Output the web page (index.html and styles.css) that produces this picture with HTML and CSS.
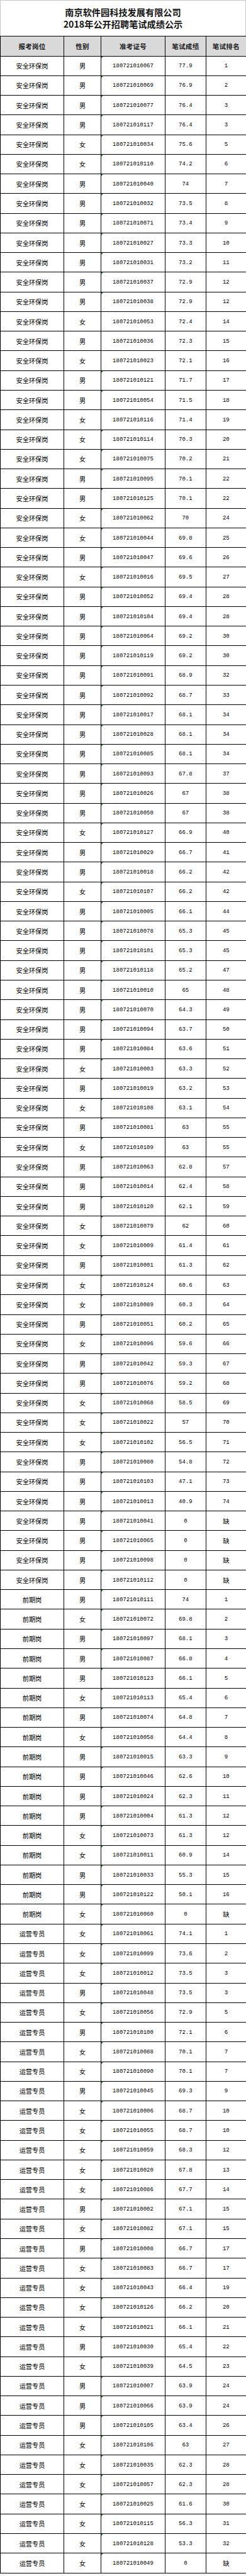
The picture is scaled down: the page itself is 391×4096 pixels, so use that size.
FILE: index.html
```html
<!DOCTYPE html>
<html lang="zh-CN">
<head>
<meta charset="utf-8">
<title>南京软件园科技发展有限公司2018年公开招聘笔试成绩公示</title>
<link rel="stylesheet" href="styles.css">
</head>
<body>
<div class="sheet">
  <div class="title">
    <div>南京软件园科技发展有限公司</div>
    <div>2018年公开招聘笔试成绩公示</div>
  </div>
  <table class="grid">
    <colgroup>
      <col class="c-post"><col class="c-sex"><col class="c-id"><col class="c-score"><col class="c-rank">
    </colgroup>
    <thead>
      <tr><th>报考岗位</th><th>性别</th><th>准考证号</th><th>笔试成绩</th><th>笔试排名</th></tr>
    </thead>
    <tbody>
<tr><td>安全环保岗</td><td>男</td><td class="id">180721010067</td><td class="n">77.9</td><td class="n">1</td></tr>
<tr><td>安全环保岗</td><td>男</td><td class="id">180721010069</td><td class="n">76.9</td><td class="n">2</td></tr>
<tr><td>安全环保岗</td><td>男</td><td class="id">180721010077</td><td class="n">76.4</td><td class="n">3</td></tr>
<tr><td>安全环保岗</td><td>男</td><td class="id">180721010117</td><td class="n">76.4</td><td class="n">3</td></tr>
<tr><td>安全环保岗</td><td>女</td><td class="id">180721010034</td><td class="n">75.6</td><td class="n">5</td></tr>
<tr><td>安全环保岗</td><td>女</td><td class="id">180721010110</td><td class="n">74.2</td><td class="n">6</td></tr>
<tr><td>安全环保岗</td><td>男</td><td class="id">180721010040</td><td class="n">74</td><td class="n">7</td></tr>
<tr><td>安全环保岗</td><td>男</td><td class="id">180721010032</td><td class="n">73.5</td><td class="n">8</td></tr>
<tr><td>安全环保岗</td><td>男</td><td class="id">180721010071</td><td class="n">73.4</td><td class="n">9</td></tr>
<tr><td>安全环保岗</td><td>男</td><td class="id">180721010027</td><td class="n">73.3</td><td class="n">10</td></tr>
<tr><td>安全环保岗</td><td>男</td><td class="id">180721010031</td><td class="n">73.2</td><td class="n">11</td></tr>
<tr><td>安全环保岗</td><td>男</td><td class="id">180721010037</td><td class="n">72.9</td><td class="n">12</td></tr>
<tr><td>安全环保岗</td><td>男</td><td class="id">180721010038</td><td class="n">72.9</td><td class="n">12</td></tr>
<tr><td>安全环保岗</td><td>女</td><td class="id plain">180721010053</td><td class="n">72.4</td><td class="n">14</td></tr>
<tr><td>安全环保岗</td><td>男</td><td class="id plain">180721010036</td><td class="n">72.3</td><td class="n">15</td></tr>
<tr><td>安全环保岗</td><td>女</td><td class="id plain">180721010023</td><td class="n">72.1</td><td class="n">16</td></tr>
<tr><td>安全环保岗</td><td>男</td><td class="id">180721010121</td><td class="n">71.7</td><td class="n">17</td></tr>
<tr><td>安全环保岗</td><td>男</td><td class="id">180721010054</td><td class="n">71.5</td><td class="n">18</td></tr>
<tr><td>安全环保岗</td><td>女</td><td class="id plain">180721010116</td><td class="n">71.4</td><td class="n">19</td></tr>
<tr><td>安全环保岗</td><td>女</td><td class="id">180721010114</td><td class="n">70.3</td><td class="n">20</td></tr>
<tr><td>安全环保岗</td><td>女</td><td class="id">180721010075</td><td class="n">70.2</td><td class="n">21</td></tr>
<tr><td>安全环保岗</td><td>男</td><td class="id">180721010095</td><td class="n">70.1</td><td class="n">22</td></tr>
<tr><td>安全环保岗</td><td>男</td><td class="id">180721010125</td><td class="n">70.1</td><td class="n">22</td></tr>
<tr><td>安全环保岗</td><td>女</td><td class="id">180721010062</td><td class="n">70</td><td class="n">24</td></tr>
<tr><td>安全环保岗</td><td>女</td><td class="id">180721010044</td><td class="n">69.8</td><td class="n">25</td></tr>
<tr><td>安全环保岗</td><td>男</td><td class="id">180721010047</td><td class="n">69.6</td><td class="n">26</td></tr>
<tr><td>安全环保岗</td><td>女</td><td class="id">180721010016</td><td class="n">69.5</td><td class="n">27</td></tr>
<tr><td>安全环保岗</td><td>男</td><td class="id">180721010052</td><td class="n">69.4</td><td class="n">28</td></tr>
<tr><td>安全环保岗</td><td>男</td><td class="id">180721010104</td><td class="n">69.4</td><td class="n">28</td></tr>
<tr><td>安全环保岗</td><td>男</td><td class="id">180721010064</td><td class="n">69.2</td><td class="n">30</td></tr>
<tr><td>安全环保岗</td><td>男</td><td class="id">180721010119</td><td class="n">69.2</td><td class="n">30</td></tr>
<tr><td>安全环保岗</td><td>男</td><td class="id">180721010091</td><td class="n">68.9</td><td class="n">32</td></tr>
<tr><td>安全环保岗</td><td>男</td><td class="id">180721010092</td><td class="n">68.7</td><td class="n">33</td></tr>
<tr><td>安全环保岗</td><td>男</td><td class="id">180721010017</td><td class="n">68.1</td><td class="n">34</td></tr>
<tr><td>安全环保岗</td><td>男</td><td class="id">180721010028</td><td class="n">68.1</td><td class="n">34</td></tr>
<tr><td>安全环保岗</td><td>男</td><td class="id">180721010085</td><td class="n">68.1</td><td class="n">34</td></tr>
<tr><td>安全环保岗</td><td>男</td><td class="id">180721010093</td><td class="n">67.8</td><td class="n">37</td></tr>
<tr><td>安全环保岗</td><td>男</td><td class="id">180721010026</td><td class="n">67</td><td class="n">38</td></tr>
<tr><td>安全环保岗</td><td>男</td><td class="id">180721010050</td><td class="n">67</td><td class="n">38</td></tr>
<tr><td>安全环保岗</td><td>女</td><td class="id">180721010127</td><td class="n">66.9</td><td class="n">40</td></tr>
<tr><td>安全环保岗</td><td>男</td><td class="id">180721010029</td><td class="n">66.7</td><td class="n">41</td></tr>
<tr><td>安全环保岗</td><td>男</td><td class="id">180721010018</td><td class="n">66.2</td><td class="n">42</td></tr>
<tr><td>安全环保岗</td><td>女</td><td class="id">180721010107</td><td class="n">66.2</td><td class="n">42</td></tr>
<tr><td>安全环保岗</td><td>男</td><td class="id">180721010005</td><td class="n">66.1</td><td class="n">44</td></tr>
<tr><td>安全环保岗</td><td>男</td><td class="id">180721010078</td><td class="n">65.3</td><td class="n">45</td></tr>
<tr><td>安全环保岗</td><td>男</td><td class="id">180721010101</td><td class="n">65.3</td><td class="n">45</td></tr>
<tr><td>安全环保岗</td><td>男</td><td class="id">180721010118</td><td class="n">65.2</td><td class="n">47</td></tr>
<tr><td>安全环保岗</td><td>男</td><td class="id">180721010010</td><td class="n">65</td><td class="n">48</td></tr>
<tr><td>安全环保岗</td><td>男</td><td class="id">180721010070</td><td class="n">64.3</td><td class="n">49</td></tr>
<tr><td>安全环保岗</td><td>男</td><td class="id">180721010094</td><td class="n">63.7</td><td class="n">50</td></tr>
<tr><td>安全环保岗</td><td>男</td><td class="id">180721010084</td><td class="n">63.6</td><td class="n">51</td></tr>
<tr><td>安全环保岗</td><td>女</td><td class="id">180721010003</td><td class="n">63.3</td><td class="n">52</td></tr>
<tr><td>安全环保岗</td><td>男</td><td class="id">180721010019</td><td class="n">63.2</td><td class="n">53</td></tr>
<tr><td>安全环保岗</td><td>女</td><td class="id">180721010108</td><td class="n">63.1</td><td class="n">54</td></tr>
<tr><td>安全环保岗</td><td>男</td><td class="id">180721010081</td><td class="n">63</td><td class="n">55</td></tr>
<tr><td>安全环保岗</td><td>女</td><td class="id">180721010109</td><td class="n">63</td><td class="n">55</td></tr>
<tr><td>安全环保岗</td><td>男</td><td class="id">180721010063</td><td class="n">62.8</td><td class="n">57</td></tr>
<tr><td>安全环保岗</td><td>男</td><td class="id">180721010014</td><td class="n">62.4</td><td class="n">58</td></tr>
<tr><td>安全环保岗</td><td>男</td><td class="id">180721010120</td><td class="n">62.1</td><td class="n">59</td></tr>
<tr><td>安全环保岗</td><td>女</td><td class="id">180721010079</td><td class="n">62</td><td class="n">60</td></tr>
<tr><td>安全环保岗</td><td>女</td><td class="id">180721010009</td><td class="n">61.4</td><td class="n">61</td></tr>
<tr><td>安全环保岗</td><td>男</td><td class="id">180721010001</td><td class="n">61.3</td><td class="n">62</td></tr>
<tr><td>安全环保岗</td><td>女</td><td class="id">180721010124</td><td class="n">60.6</td><td class="n">63</td></tr>
<tr><td>安全环保岗</td><td>女</td><td class="id">180721010089</td><td class="n">60.3</td><td class="n">64</td></tr>
<tr><td>安全环保岗</td><td>男</td><td class="id">180721010051</td><td class="n">60.2</td><td class="n">65</td></tr>
<tr><td>安全环保岗</td><td>女</td><td class="id">180721010096</td><td class="n">59.6</td><td class="n">66</td></tr>
<tr><td>安全环保岗</td><td>男</td><td class="id">180721010042</td><td class="n">59.3</td><td class="n">67</td></tr>
<tr><td>安全环保岗</td><td>男</td><td class="id">180721010076</td><td class="n">59.2</td><td class="n">68</td></tr>
<tr><td>安全环保岗</td><td>女</td><td class="id">180721010068</td><td class="n">58.5</td><td class="n">69</td></tr>
<tr><td>安全环保岗</td><td>女</td><td class="id">180721010022</td><td class="n">57</td><td class="n">70</td></tr>
<tr><td>安全环保岗</td><td>女</td><td class="id">180721010102</td><td class="n">56.5</td><td class="n">71</td></tr>
<tr><td>安全环保岗</td><td>男</td><td class="id">180721010080</td><td class="n">54.8</td><td class="n">72</td></tr>
<tr><td>安全环保岗</td><td>男</td><td class="id">180721010103</td><td class="n">47.1</td><td class="n">73</td></tr>
<tr><td>安全环保岗</td><td>男</td><td class="id">180721010013</td><td class="n">40.9</td><td class="n">74</td></tr>
<tr><td>安全环保岗</td><td>男</td><td class="id">180721010041</td><td class="n">0</td><td>缺</td></tr>
<tr><td>安全环保岗</td><td>男</td><td class="id">180721010065</td><td class="n">0</td><td>缺</td></tr>
<tr><td>安全环保岗</td><td>男</td><td class="id">180721010098</td><td class="n">0</td><td>缺</td></tr>
<tr><td>安全环保岗</td><td>男</td><td class="id">180721010112</td><td class="n">0</td><td>缺</td></tr>
<tr><td>前期岗</td><td>男</td><td class="id">180721010111</td><td class="n">74</td><td class="n">1</td></tr>
<tr><td>前期岗</td><td>女</td><td class="id">180721010072</td><td class="n">69.8</td><td class="n">2</td></tr>
<tr><td>前期岗</td><td>男</td><td class="id">180721010097</td><td class="n">68.1</td><td class="n">3</td></tr>
<tr><td>前期岗</td><td>男</td><td class="id">180721010087</td><td class="n">66.8</td><td class="n">4</td></tr>
<tr><td>前期岗</td><td>男</td><td class="id">180721010123</td><td class="n">66.1</td><td class="n">5</td></tr>
<tr><td>前期岗</td><td>女</td><td class="id">180721010113</td><td class="n">65.4</td><td class="n">6</td></tr>
<tr><td>前期岗</td><td>男</td><td class="id">180721010074</td><td class="n">64.8</td><td class="n">7</td></tr>
<tr><td>前期岗</td><td>女</td><td class="id">180721010058</td><td class="n">64.4</td><td class="n">8</td></tr>
<tr><td>前期岗</td><td>男</td><td class="id">180721010015</td><td class="n">63.3</td><td class="n">9</td></tr>
<tr><td>前期岗</td><td>男</td><td class="id">180721010046</td><td class="n">62.6</td><td class="n">10</td></tr>
<tr><td>前期岗</td><td>男</td><td class="id">180721010024</td><td class="n">62.3</td><td class="n">11</td></tr>
<tr><td>前期岗</td><td>男</td><td class="id">180721010004</td><td class="n">61.3</td><td class="n">12</td></tr>
<tr><td>前期岗</td><td>女</td><td class="id">180721010073</td><td class="n">61.3</td><td class="n">12</td></tr>
<tr><td>前期岗</td><td>女</td><td class="id">180721010011</td><td class="n">60.9</td><td class="n">14</td></tr>
<tr><td>前期岗</td><td>男</td><td class="id">180721010033</td><td class="n">55.3</td><td class="n">15</td></tr>
<tr><td>前期岗</td><td>男</td><td class="id">180721010122</td><td class="n">50.1</td><td class="n">16</td></tr>
<tr><td>前期岗</td><td>女</td><td class="id">180721010060</td><td class="n">0</td><td>缺</td></tr>
<tr><td>运营专员</td><td>女</td><td class="id">180721010061</td><td class="n">74.1</td><td class="n">1</td></tr>
<tr><td>运营专员</td><td>女</td><td class="id">180721010099</td><td class="n">73.6</td><td class="n">2</td></tr>
<tr><td>运营专员</td><td>女</td><td class="id">180721010012</td><td class="n">73.5</td><td class="n">3</td></tr>
<tr><td>运营专员</td><td>男</td><td class="id">180721010048</td><td class="n">73.5</td><td class="n">3</td></tr>
<tr><td>运营专员</td><td>女</td><td class="id">180721010056</td><td class="n">72.9</td><td class="n">5</td></tr>
<tr><td>运营专员</td><td>男</td><td class="id">180721010100</td><td class="n">72.1</td><td class="n">6</td></tr>
<tr><td>运营专员</td><td>女</td><td class="id">180721010088</td><td class="n">70.1</td><td class="n">7</td></tr>
<tr><td>运营专员</td><td>女</td><td class="id">180721010090</td><td class="n">70.1</td><td class="n">7</td></tr>
<tr><td>运营专员</td><td>男</td><td class="id">180721010045</td><td class="n">69.3</td><td class="n">9</td></tr>
<tr><td>运营专员</td><td>女</td><td class="id">180721010006</td><td class="n">68.7</td><td class="n">10</td></tr>
<tr><td>运营专员</td><td>女</td><td class="id">180721010055</td><td class="n">68.7</td><td class="n">10</td></tr>
<tr><td>运营专员</td><td>女</td><td class="id">180721010059</td><td class="n">68.3</td><td class="n">12</td></tr>
<tr><td>运营专员</td><td>女</td><td class="id">180721010020</td><td class="n">67.8</td><td class="n">13</td></tr>
<tr><td>运营专员</td><td>女</td><td class="id">180721010086</td><td class="n">67.7</td><td class="n">14</td></tr>
<tr><td>运营专员</td><td>男</td><td class="id">180721010002</td><td class="n">67.1</td><td class="n">15</td></tr>
<tr><td>运营专员</td><td>女</td><td class="id">180721010082</td><td class="n">67.1</td><td class="n">15</td></tr>
<tr><td>运营专员</td><td>男</td><td class="id">180721010008</td><td class="n">66.7</td><td class="n">17</td></tr>
<tr><td>运营专员</td><td>女</td><td class="id">180721010083</td><td class="n">66.7</td><td class="n">17</td></tr>
<tr><td>运营专员</td><td>女</td><td class="id">180721010043</td><td class="n">66.4</td><td class="n">19</td></tr>
<tr><td>运营专员</td><td>女</td><td class="id">180721010126</td><td class="n">66.2</td><td class="n">20</td></tr>
<tr><td>运营专员</td><td>女</td><td class="id">180721010021</td><td class="n">66.1</td><td class="n">21</td></tr>
<tr><td>运营专员</td><td>男</td><td class="id">180721010030</td><td class="n">65.4</td><td class="n">22</td></tr>
<tr><td>运营专员</td><td>女</td><td class="id">180721010039</td><td class="n">64.5</td><td class="n">23</td></tr>
<tr><td>运营专员</td><td>男</td><td class="id">180721010007</td><td class="n">63.9</td><td class="n">24</td></tr>
<tr><td>运营专员</td><td>男</td><td class="id">180721010066</td><td class="n">63.9</td><td class="n">24</td></tr>
<tr><td>运营专员</td><td>男</td><td class="id">180721010105</td><td class="n">63.4</td><td class="n">26</td></tr>
<tr><td>运营专员</td><td>女</td><td class="id">180721010106</td><td class="n">63</td><td class="n">27</td></tr>
<tr><td>运营专员</td><td>女</td><td class="id">180721010035</td><td class="n">62.3</td><td class="n">28</td></tr>
<tr><td>运营专员</td><td>女</td><td class="id">180721010057</td><td class="n">62.3</td><td class="n">28</td></tr>
<tr><td>运营专员</td><td>女</td><td class="id">180721010025</td><td class="n">61.6</td><td class="n">30</td></tr>
<tr><td>运营专员</td><td>女</td><td class="id">180721010115</td><td class="n">56.3</td><td class="n">31</td></tr>
<tr><td>运营专员</td><td>女</td><td class="id">180721010128</td><td class="n">53.3</td><td class="n">32</td></tr>
<tr><td>运营专员</td><td>女</td><td class="id">180721010049</td><td class="n">0</td><td>缺</td></tr>
    </tbody>
  </table>
</div>
</body>
</html>
```

FILE: styles.css
```css
* {
  box-sizing: border-box;
}

html, body {
  margin: 0;
  padding: 0;
  background: #ffffff;
}

body {
  font-family: "Noto Sans CJK SC", "Noto Sans", sans-serif;
  color: #000000;
}

.sheet {
  width: 391px;
}

.title {
  height: 56.5px;
  border: 1px solid #c6c6c6;
  border-bottom: none;
  display: flex;
  flex-direction: column;
  justify-content: center;
  align-items: center;
  font-weight: 700;
  font-size: 14.2px;
  line-height: 19.6px;
  color: #141414;
  padding-top: 1px;
}

.grid {
  width: 391px;
  border-collapse: collapse;
  table-layout: fixed;
}

.c-post { width: 101px; }
.c-sex { width: 59px; }
.c-id { width: 102px; }
.c-score { width: 64.7px; }
.c-rank { width: 64.3px; }

.grid th {
  height: 32px;
  background: #d9d9d9;
  border: 1px solid #000000;
  border-top: 1.5px solid #000000;
  font-size: 10.5px;
  font-weight: 700;
  color: #1a1a1a;
  text-align: center;
  vertical-align: middle;
  padding: 0;
  letter-spacing: 0.3px;
}

.grid td {
  height: 31.28px;
  border: 1px solid #000000;
  font-size: 10.2px;
  line-height: 12px;
  text-align: center;
  vertical-align: middle;
  padding: 1px 0 0 0;
  color: #000000;
  white-space: nowrap;
}

.grid td.n,
.grid td.id {
  font-family: "Liberation Mono", "DejaVu Sans Mono", monospace;
  font-size: 9px;
}

.grid td.id {
  position: relative;
}

.grid td.id::before {
  content: "";
  position: absolute;
  left: 0;
  top: 0;
  width: 0;
  height: 0;
  border-top: 3px solid #1f8a1f;
  border-right: 3px solid transparent;
}

.grid td.id.plain::before {
  display: none;
}
```
